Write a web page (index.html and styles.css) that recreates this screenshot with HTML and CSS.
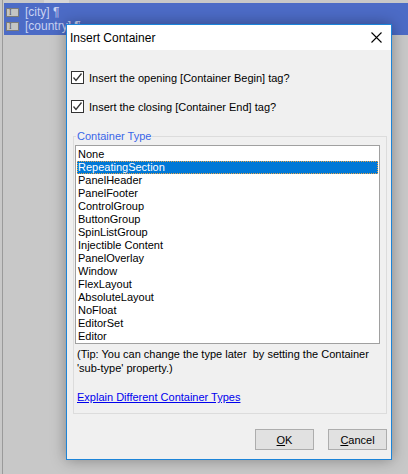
FILE: index.html
```html
<!DOCTYPE html>
<html lang="en">
  <head>
    <meta charset="UTF-8" />
    <title>Insert Container</title>
    <link rel="stylesheet" href="styles.css">
  </head>
  <body>
    <div class="editor">
      <div class="top-strip"><span class="tab"></span></div>
      <div class="selection">
        <div class="field-row"><span class="field-icon">I</span><span>[city] ¶</span></div>
        <div class="field-row"><span class="field-icon">I</span><span>[country] ¶</span></div>
      </div>
    </div>

    <div class="dialog">
      <div class="title-bar">
        <span class="title">Insert Container</span>
        <span class="close">
          <svg width="11" height="11" viewBox="0 0 11 11"><path d="M0.5 0.5 L10.5 10.5 M10.5 0.5 L0.5 10.5" stroke="#000" stroke-width="1.1" fill="none"/></svg>
        </span>
      </div>
      <div class="dialog-body">
        <label class="check-row">
          <span class="check-box"><svg width="11" height="11" viewBox="0 0 11 11"><path d="M1.5 5.5 L4 8.5 L9.5 1.5" stroke="#333" stroke-width="1.3" fill="none"/></svg></span>
          Insert the opening [Container Begin] tag?
        </label>
        <label class="check-row second">
          <span class="check-box"><svg width="11" height="11" viewBox="0 0 11 11"><path d="M1.5 5.5 L4 8.5 L9.5 1.5" stroke="#333" stroke-width="1.3" fill="none"/></svg></span>
          Insert the closing [Container End] tag?
        </label>

        <fieldset class="group">
          <legend>Container Type</legend>
          <ul class="list">
            <li>None</li>
            <li class="selected">RepeatingSection</li>
            <li>PanelHeader</li>
            <li>PanelFooter</li>
            <li>ControlGroup</li>
            <li>ButtonGroup</li>
            <li>SpinListGroup</li>
            <li>Injectible Content</li>
            <li>PanelOverlay</li>
            <li>Window</li>
            <li>FlexLayout</li>
            <li>AbsoluteLayout</li>
            <li>NoFloat</li>
            <li>EditorSet</li>
            <li>Editor</li>
          </ul>
          <p class="tip">(Tip: You can change the type later&nbsp; by setting the Container<br>'sub-type' property.)</p>
          <a class="link" href="#">Explain Different Container Types</a>
        </fieldset>

        <div class="buttons">
          <button type="button"><u>O</u>K</button>
          <button type="button"><u>C</u>ancel</button>
        </div>
      </div>
    </div>
  </body>
</html>
```

FILE: styles.css
```css
/* editor behind the dialog */
body {
    margin: 0;
    background-color: #c8c8c8;
    font-family: "Liberation Sans", Arial, sans-serif;
    font-size: 11px;
    overflow: hidden;
}

.editor {
    margin-left: 2px;
    padding-left: 1px;
    height: 474px;
    border-left: 1px solid #9a9a9a;
}

.top-strip {
    height: 3px;
}

.tab {
    display: block;
    margin-left: 40px;
    width: 25px;
    height: 3px;
    background-color: #d6d6d6;
}

.selection {
    height: 32px;
    padding-top: 2px;
    box-sizing: border-box;
    background-color: #4c6bc6;
    color: #c9d2f2;
}

.field-row {
    display: flex;
    align-items: center;
    height: 14px;
    font-size: 12px;
}

.field-icon {
    width: 11px;
    height: 7px;
    margin: 0 6px 0 2px;
    background-color: #c4c4c4;
    border: 1px solid #7a7a7a;
    color: #555;
    font-family: "Liberation Serif", serif;
    font-size: 8px;
    line-height: 7px;
    text-indent: 2px;
}

/* dialog */
.dialog {
    position: absolute;
    left: 66px;
    top: 24px;
    width: 324px;
    height: 434px;
    border: 1px solid #1c84d8;
    background-color: #f0f0f0;
    box-shadow: 0 0 14px rgba(0, 0, 0, 0.35);
    color: #000;
}

.title-bar {
    display: flex;
    align-items: center;
    justify-content: space-between;
    height: 25px;
    background-color: #ffffff;
    padding: 0 9px 0 3px;
}

.title {
    font-size: 12px;
}

.close {
    display: flex;
}

.dialog-body {
    padding: 21px 0 0 4px;
}

.check-row {
    display: flex;
    align-items: center;
    gap: 5px;
    height: 13px;
}

.check-row.second {
    margin-top: 16px;
}

.check-box {
    display: flex;
    width: 11px;
    height: 11px;
    border: 1px solid #333;
    background-color: #fff;
}

.group {
    margin: 17px 0 0 2px;
    width: 314px;
    height: 284px;
    padding: 0 6px 0 1px;
    border: 1px solid #dcdcdc;
    box-sizing: border-box;
}

.group legend {
    padding: 0 1px;
    margin-left: 1px;
    color: #3a66e8;
    line-height: 13px;
}

.list {
    list-style: none;
    margin: 2px 0 0 0;
    padding: 2px 1px;
    height: 199px;
    box-sizing: border-box;
    border: 1px solid #a0a0a0;
    background-color: #fff;
    overflow: hidden;
}

.list li {
    height: 13px;
    line-height: 13px;
    padding-left: 1px;
    white-space: nowrap;
}

.list li.selected {
    background-color: #0078d7;
    color: #fff;
    outline: 1px dotted #e8a448;
    outline-offset: -1px;
}

.tip {
    margin: 3px 0 0 2px;
    line-height: 14px;
}

.link {
    display: block;
    margin: 16px 0 0 2px;
    color: #0000ee;
}

.buttons {
    display: flex;
    justify-content: flex-end;
    gap: 14px;
    margin: 15px 4px 0 0;
}

button {
    width: 59px;
    height: 21px;
    padding: 0;
    background-color: #e1e1e1;
    border: 1px solid #adadad;
    font-family: "Liberation Sans", Arial, sans-serif;
    font-size: 11px;
    color: #000;
}
```
